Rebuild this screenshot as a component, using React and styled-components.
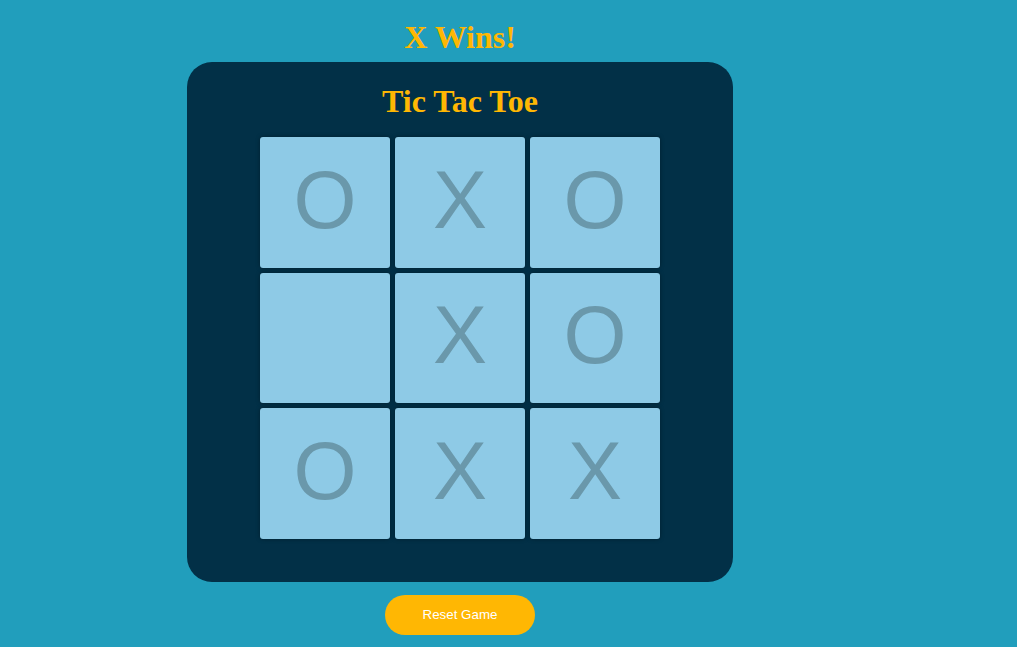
import React from "react";
import styled, { createGlobalStyle } from "styled-components";

const Global = createGlobalStyle`
  html, body { margin: 0; padding: 0; background: #219ebc; }
  body { font-family: "Liberation Sans", Arial, sans-serif; }
`;

const Page = styled.div`
  width: 920px;
  min-height: 647px;
  display: flex;
  flex-direction: column;
  align-items: center;
  padding-top: 19px;
  box-sizing: border-box;
`;

const Status = styled.h2`
  margin: 0 0 7px;
  font-family: "Liberation Serif", "Times New Roman", serif;
  font-size: 32px;
  line-height: 36px;
  font-weight: bold;
  color: #ffb703;
`;

const Board = styled.div`
  width: 546px;
  box-sizing: border-box;
  padding: 21px 73px 43px;
  background: #023047;
  border-radius: 25px;
  display: flex;
  flex-direction: column;
  align-items: center;
`;

const Title = styled.h1`
  margin: 0 0 18px;
  font-family: "Liberation Serif", "Times New Roman", serif;
  font-size: 32px;
  line-height: 36px;
  font-weight: bold;
  color: #ffb703;
`;

const Grid = styled.div`
  display: grid;
  grid-template-columns: repeat(3, 130px);
  grid-auto-rows: 130.5px;
  gap: 5px;
`;

const Cell = styled.div`
  background: #8ecae6;
  border-radius: 3px;
  box-shadow: 0 0 4px rgba(0, 0, 0, 0.35);
  display: flex;
  align-items: center;
  justify-content: center;
  font-family: "Liberation Sans", Arial, sans-serif;
  font-size: 81px;
  line-height: 1;
  padding-bottom: 4px;
  box-sizing: border-box;
  color: #6a98ab;
`;

const ResetButton = styled.button`
  margin-top: 13px;
  width: 150px;
  height: 40px;
  border: none;
  border-radius: 20px;
  background: #ffb703;
  color: #ffffff;
  font-family: "Liberation Sans", Arial, sans-serif;
  font-size: 13.33px;
  cursor: pointer;
`;

const cells = ["O", "X", "O", "", "X", "O", "O", "X", "X"];

export default function App() {
  return (
    <>
      <Global />
      <Page>
        <Status>X Wins!</Status>
        <Board>
          <Title>Tic Tac Toe</Title>
          <Grid>
            {cells.map((c, i) => (
              <Cell key={i}>{c}</Cell>
            ))}
          </Grid>
        </Board>
        <ResetButton>Reset Game</ResetButton>
      </Page>
    </>
  );
}
